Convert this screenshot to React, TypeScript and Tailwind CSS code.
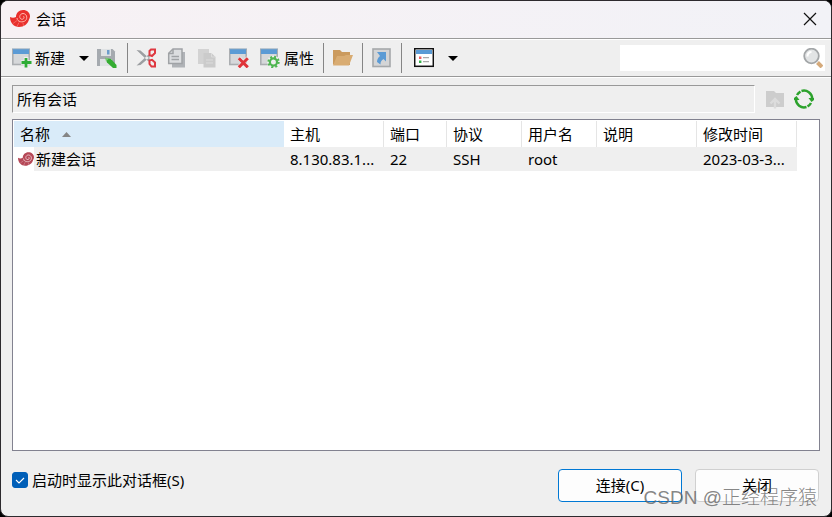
import type { ReactNode } from "react";

function Icon({ children }: { children: ReactNode }) {
  return (
    <svg viewBox="0 0 20 20" aria-hidden="true" className="block h-5 w-5 shrink-0">
      {children}
    </svg>
  );
}

function Shell({ main, soft, className }: { main: string; soft: string; className: string }) {
  return (
    <svg viewBox="0 0 20 17" aria-hidden="true" className={className}>
      <path
        d="M0 7c2 1 4 1 6 0C6 3 9 0 13 0c4 0 7 2.500 7 6.500 0 1-.5 2-1 3C18 14 14 17 9 17 4 17 0 13 0 7Z"
        fill={main}
      />
      <path
        d="M7 8c0 4 6 5 8.500 2.500 2.500-2.500 1-7-2.500-7-3 0-4.500 4-2 5.500 2 1 4-1 2.500-2.800"
        fill="none"
        stroke={soft}
        strokeWidth="1"
      />
      <path d="M7 10.500l-4 3M9 12.500l-2 4M13 13l.5 3" stroke={soft} strokeWidth=".4" />
    </svg>
  );
}

function WindowBase() {
  return (
    <>
      <rect x=".8" y="1.500" width="16.400" height="15" fill="#d6d8da" stroke="#abaeb1" strokeWidth="1.600" />
      <rect x="1" y="1" width="16" height="5" fill="#5b9bd5" />
      <path d="M0 1h18" stroke="#8ca6bf" strokeWidth=".8" />
    </>
  );
}

function Caret() {
  return (
    <svg viewBox="0 0 10 5" aria-hidden="true" className="block h-[5px] w-2.5">
      <path d="M0 0h10L5 5z" fill="#000" />
    </svg>
  );
}

function Divider() {
  return <div className="h-[30px] w-px shrink-0 bg-[#858585]" />;
}

function Sheet({ dim = false }: { dim?: boolean }) {
  return dim ? (
    <Icon>
      <path d="M0 1h11v15H0z" fill="#d3d3d3" />
      <path d="M5.500 5h8l4 4v10.500h-12z" fill="#cbcbcb" />
      <path d="M13.500 5v4h4M8 12h7M8 15h7" stroke="#dcdcdc" fill="none" />
    </Icon>
  ) : (
    <Icon>
      <path d="M6 4h12v15.500H5V16z" fill="#b0b3b7" />
      <path d="M6 1h9v14.500H1.700V5.300z" fill="#dcdee0" stroke="#a0a3a6" strokeWidth="1.500" />
      <path d="M6 1v4.500H1.700M4.500 8.500H12M4.500 11.500H12" stroke="#a0a3a6" strokeWidth="1.500" fill="none" />
    </Icon>
  );
}

const columns = [
  { title: "主机", value: "8.130.83.1...", width: "w-[100px]" },
  { title: "端口", value: "22", width: "w-[63px]" },
  { title: "协议", value: "SSH", width: "w-[75px]" },
  { title: "用户名", value: "root", width: "w-[75px]" },
  { title: "说明", value: "", width: "w-[100px]" },
  { title: "修改时间", value: "2023-03-3...", width: "w-[100px]" },
];

export default function App() {
  return (
    <div className="h-screen bg-black font-['Noto_Sans','Noto_Sans_CJK_SC',sans-serif] text-[15px] leading-5 text-black">
      <main className="relative flex h-full flex-col overflow-hidden rounded-lg border border-[#2d2a2e] bg-[#efefef]">
        <header className="flex h-[37px] shrink-0 items-center bg-linear-to-r from-[#f7f1f4] to-[#f2f2f7] pr-3.5 pb-0.5 pl-[9px]">
          <Shell main="#e9302d" soft="#ffb8ad" className="h-[17px] w-5" />
          <h1 className="ml-1.5">会话</h1>
          <button type="button" aria-label="关闭窗口" className="ml-auto">
            <svg viewBox="0 0 14 14" className="block h-3.5 w-3.5" aria-hidden="true">
              <path d="M1 1l12 12M13 1L1 13" stroke="#111" strokeWidth="1.2" />
            </svg>
          </button>
        </header>

        <div className="flex h-[39px] shrink-0 items-center border-y border-[#999] pt-px pr-1.5 pl-[11px] shadow-[inset_0_1px_0_#fff,0_1px_0_#fff]">
          <button type="button" className="flex items-center gap-[3px]">
            <Icon>
              <WindowBase />
              <path d="M14 9v11M9 14.500h11" stroke="#efefef" strokeWidth="4.500" />
              <path d="M14 10v9.500M9.500 14.500h10" stroke="#2eac35" strokeWidth="2.800" />
            </Icon>
            新建
          </button>
          <button type="button" aria-label="新建选项" className="ml-3.5">
            <Caret />
          </button>
          <button type="button" aria-label="保存" className="mr-2.5 ml-2">
            <Icon>
              <path d="M0 1h15.500L18 3.500V18H0z" fill="#a5aaaf" />
              <path d="M4 1h10v7H4zM3 11h12v7H3z" fill="#dfe2e4" />
              <path d="M10 2h2.500v4.500H10z" fill="#6d9dcc" />
              <path d="M8.500 10l1.500 4.500 6 5.500h3.500v-3L14 11z" fill="#35ad32" />
              <path d="M8 9.500l4 1-3 3z" fill="#7bc678" />
            </Icon>
          </button>
          <Divider />
          <div className="mr-[9px] ml-2 flex items-center gap-[11px]">
            <button type="button" aria-label="剪切">
              <Icon>
                <path d="M.5 2l4 .5L14 11l-1.500 2.500zM.5 17.500l4-.5L14 9l-1.500-2.500z" fill="#9c9fa2" />
                <g fill="none" stroke="#df3941" strokeWidth="2">
                  <path d="M13.500 7V3L15 1.500h4V5l-3 3zM13.500 12.500v3.500L15.500 18.500H19V14.500L16 11.800z" />
                </g>
              </Icon>
            </button>
            <button type="button" aria-label="复制"><Sheet /></button>
            <button type="button" aria-label="粘贴" disabled><Sheet dim /></button>
            <button type="button" aria-label="删除">
              <Icon>
                <WindowBase />
                <path d="M10 10l9 9M19 10l-9 9" stroke="#efefef" strokeWidth="4" />
                <path d="M9.800 10.300l9 9M18.800 10.300l-9 9" stroke="#df3439" strokeWidth="3" />
              </Icon>
            </button>
            <button type="button" className="flex items-center gap-1">
              <Icon>
                <WindowBase />
                <circle cx="13.500" cy="14" r="6.500" fill="#efefef" />
                <circle cx="13.500" cy="14" r="5.200" fill="none" stroke="#4fb651" strokeWidth="2" strokeDasharray="2.042 2.042" />
                <circle cx="13.500" cy="14" r="3.600" fill="none" stroke="#4fb651" strokeWidth="2.200" />
              </Icon>
              属性
            </button>
          </div>
          <Divider />
          <button type="button" aria-label="打开文件夹" className="mx-[9px]">
            <Icon>
              <path d="M0 2h7l2 2h8v13H1l-1-1z" fill="#cb9a5d" />
              <path d="M4 8h7l2-1h7l-4 10.500H0z" fill="#d9ac72" />
            </Icon>
          </button>
          <Divider />
          <button type="button" aria-label="创建快捷方式" className="mx-[9px]">
            <Icon>
              <rect x="1" y="1" width="17" height="17.500" fill="#d4d5d6" stroke="#a5a8aa" strokeWidth="1.600" />
              <path d="M5 4h9v9.500L11.500 11C9 12.500 8.500 14 8.500 16.500L5 14c0-2.500 1-4.500 3-6z" fill="#5b9bd5" />
            </Icon>
          </button>
          <Divider />
          <button type="button" aria-label="视图" className="ml-3">
            <Icon>
              <rect x=".7" y=".7" width="18.600" height="17.600" fill="#fff" stroke="#111" strokeWidth="1.500" />
              <path d="M2 2h16v4H2z" fill="#5b9bd5" />
              <path d="M5 8.500h2.400V11H5z" fill="#ef5c60" />
              <path d="M5 12.500h2.400V15H5z" fill="#36b34a" />
              <path d="M9 9.700h6M9 13.700h6" stroke="#aaa" strokeWidth="1.200" />
            </Icon>
          </button>
          <button type="button" aria-label="视图选项" className="ml-3.5"><Caret /></button>
          <div className="ml-auto flex h-[26px] w-[205px] items-center bg-white">
            <input aria-label="搜索" type="search" className="min-w-0 flex-1 bg-transparent px-1 outline-none" />
            <button type="button" aria-label="开始搜索" className="mr-0.5">
              <Icon>
                <circle cx="8.500" cy="8" r="7.300" fill="#e2e4e5" stroke="#a3a6a8" strokeWidth="1.800" />
                <path d="M4.500 8.500c0-2.500 1.500-4.500 4-4.500" fill="none" stroke="#fff" strokeWidth="2" />
                <path d="M14.500 14.500l4.500 4.500" stroke="#d5aa7b" strokeWidth="4" />
              </Icon>
            </button>
          </div>
        </div>

        <section className="flex min-h-0 flex-1 flex-col px-[11px] pt-2">
          <div className="flex items-center">
            <div className="flex h-7 flex-1 items-center border border-t-[#999] border-r-white border-b-white border-l-[#999] pl-1">
              所有会话
            </div>
            <div className="ml-2.5 flex items-center gap-[9px] pr-1.5">
              <button type="button" aria-label="上级文件夹" disabled>
                <Icon>
                  <path d="M1 2h8l2 2h8v14H1z" fill="#cdcdcd" />
                  <path d="M10 19.500V11M5.500 14.500L10 10l4.500 4.500" fill="none" stroke="#dcdcdc" strokeWidth="2.400" />
                </Icon>
              </button>
              <button type="button" aria-label="刷新">
                <Icon>
                  <g fill="none" stroke="#2ca22c" strokeWidth="2.500">
                    <path d="M7.500 2A8.300 8.300 0 0 1 18.200 10M12.500 18A8.300 8.300 0 0 1 1.800 10" />
                    <path d="M3 6A8.300 8.300 0 0 1 6.500 2.600M17 14A8.300 8.300 0 0 1 13.500 17.400" />
                  </g>
                  <path d="M14.500 9h5.500v2l-2.500 2zM0 11V9l2.500-2 3 4z" fill="#2ca22c" />
                </Icon>
              </button>
            </div>
          </div>

          <div className="mt-1.5 min-h-0 flex-1 overflow-hidden border border-[#828290] bg-white px-px pt-px">
            <table className="w-[783px] table-fixed border-collapse text-left">
              <thead>
                <tr className="h-[26px]">
                  <th className="w-[270px] bg-[#d9ebf9] p-0 pl-1.5 font-normal">
                    <button type="button" className="flex items-center gap-3">
                      名称
                      <svg viewBox="0 0 9 5" className="h-[5px] w-[9px]" aria-hidden="true">
                        <path d="M0 5h9L4.500 0z" fill="#858585" />
                      </svg>
                    </button>
                  </th>
                  {columns.map((c) => (
                    <th key={c.title} className={`${c.width} p-0 pl-1.5 font-normal shadow-[inset_-1px_0_0_#e5e5e5]`}>
                      {c.title}
                    </th>
                  ))}
                </tr>
              </thead>
              <tbody>
                <tr className="h-6">
                  <td className="p-0">
                    <div className="flex items-center">
                      <div className="flex h-6 w-5 shrink-0 items-center pl-1">
                        <Shell main="#b54857" soft="#f4d7db" className="h-3.5 w-4" />
                      </div>
                      <div className="flex h-6 flex-1 items-center bg-[#efefef] pl-0.5">新建会话</div>
                    </div>
                  </td>
                  {columns.map((c) => (
                    <td key={c.title} className="bg-[#efefef] p-0 pl-1.5 whitespace-nowrap">{c.value}</td>
                  ))}
                </tr>
              </tbody>
            </table>
          </div>
        </section>

        <footer className="flex h-[65px] shrink-0 items-start pt-[18px] pr-3 pl-[11px]">
          <label className="flex items-center gap-1 pt-px">
            <span className="grid h-4 w-4">
              <input
                type="checkbox"
                defaultChecked
                className="peer col-start-1 row-start-1 h-4 w-4 appearance-none rounded-[3px] border border-[#005fb8] bg-white checked:bg-[#005fb8]"
              />
              <svg viewBox="0 0 16 16" aria-hidden="true" className="pointer-events-none invisible col-start-1 row-start-1 peer-checked:visible">
                <path d="M4 8l3 3 5-5" fill="none" stroke="#fff" strokeWidth="1.1" />
              </svg>
            </span>
            启动时显示此对话框(S)
          </label>
          <div className="ml-auto flex gap-[13px]">
            <button type="button" className="h-[33px] w-[124px] rounded-sm border border-[#0078d4] bg-[#fdfdfd] pb-0.5">
              连接(C)
            </button>
            <button type="button" className="h-[33px] w-[124px] rounded-sm border border-[#d0d0d0] bg-[#fdfdfd] pb-0.5">
              关闭
            </button>
          </div>
        </footer>

        <div className="pointer-events-none absolute right-3.5 bottom-1 font-['Liberation_Sans','Noto_Sans_CJK_SC',sans-serif] text-[19px] leading-7 font-light whitespace-nowrap text-[#666]/80">
          CSDN @正经程序猿
        </div>
      </main>
    </div>
  );
}
